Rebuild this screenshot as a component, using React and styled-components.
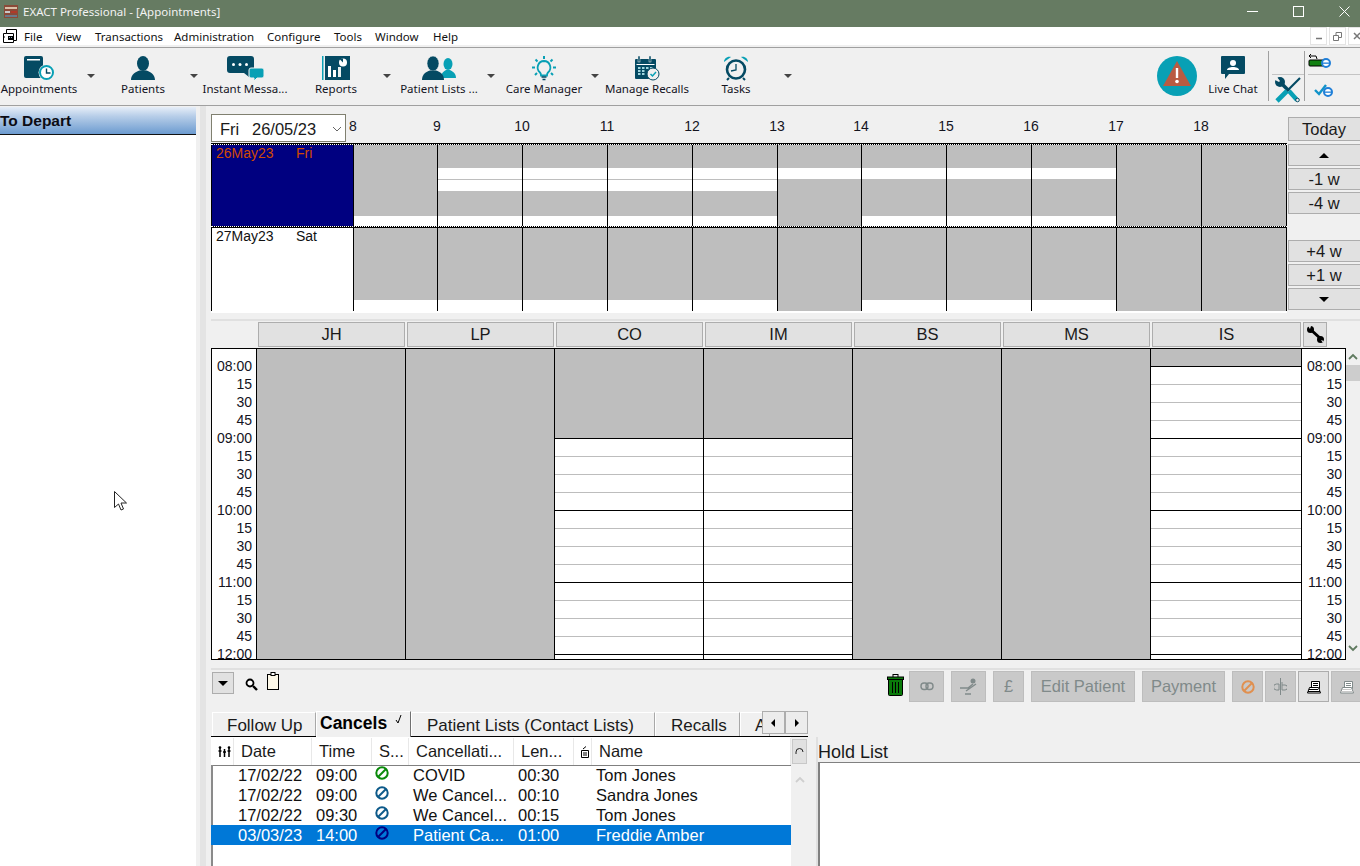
import React from 'react';
import styled, { createGlobalStyle } from 'styled-components';

const DARK = '#044a63';
const TEAL = '#08a0b5';
const GRAY = '#bebebe';

const GlobalStyle = createGlobalStyle`
  html, body {
    margin: 0;
    padding: 0;
    background: #f0f0f0;
    overflow: hidden;
  }
  * { box-sizing: border-box; }
`;

const Page = styled.div`
  width: 1360px;
  height: 866px;
  overflow: hidden;
  display: flex;
  flex-direction: column;
  background: #f0f0f0;
  font-family: "Liberation Sans", Arial, sans-serif;
  color: #111;
`;

/* window chrome */
const TitleBar = styled.div`
  height: 27px;
  flex: none;
  display: flex;
  align-items: center;
  background: #667b62;
  color: #f2f2f2;
  font-family: "Noto Sans", sans-serif;
  font-size: 11.5px;
  padding: 0 0 5px 3px;
`;
const TitleText = styled.span`
  margin-left: 4px;
  flex: 1;
`;
const WinControl = styled.div`
  width: ${(p) => p.$w || 45.5}px;
  padding-left: ${(p) => p.$pl || 0}px;
  height: 22px;
  flex: none;
  display: flex;
  align-items: center;
  justify-content: center;
`;
const MenuBar = styled.div`
  height: 18px;
  flex: none;
  margin-bottom: 2px;
  background: #fff;
  display: flex;
  align-items: center;
  font-family: "Noto Sans", sans-serif;
  font-size: 11.5px;
`;
const MenuIcon = styled.div`
  width: 24px;
  height: 18px;
  padding-left: 2px;
  display: flex;
  align-items: center;
`;
const MenuItem = styled.span`
  width: ${(p) => p.$w}px;
`;
const MdiButtons = styled.div`
  margin-left: auto;
  display: flex;
  gap: 2px;
  width: 50px;
  height: 18px;
`;
const MdiButton = styled.div`
  width: 17px;
  flex: none;
  height: 18px;
  background: #fff;
  border: 1px solid #e4e4e4;
  display: flex;
  align-items: center;
  justify-content: center;
`;

/* main toolbar */
const Toolbar = styled.div`
  height: 59px;
  flex: none;
  display: flex;
  border-top: 1px solid #a0a0a0;
  border-bottom: 1px solid #a0a0a0;
  font-family: "Noto Sans", sans-serif;
  font-size: 11.5px;
`;
const ToolItem = styled.div`
  width: ${(p) => p.$w}px;
  flex: none;
  display: flex;
  flex-direction: column;
  align-items: center;
  padding-top: 8px;
  white-space: nowrap;
`;
const ToolIcon = styled.div`
  height: 25px;
  display: flex;
  align-items: flex-start;
  justify-content: center;
`;
const ToolLabel = styled.div`
  height: 16px;
  line-height: 16px;
  color: #14141e;
`;
const CaretSlot = styled.div`
  width: ${(p) => p.$w}px;
  flex: none;
  display: flex;
  justify-content: center;
  padding-top: 26px;
`;
const Caret = styled.div`
  width: 0;
  height: 0;
  border-left: 4px solid transparent;
  border-right: 4px solid transparent;
  border-top: 4px solid #444;
`;
const Spacer = styled.div`
  width: ${(p) => p.$w}px;
  flex: none;
`;
const AlertSlot = styled.div`
  width: 40px;
  flex: none;
  padding-top: 8px;
`;
const VSep = styled.div`
  width: 1px;
  flex: none;
  margin-top: 3px;
  height: 50px;
  background: #a0a0a0;
`;
const SideGroup = styled.div`
  width: ${(p) => p.$w}px;
  flex: none;
  display: flex;
  flex-direction: column;
  padding: 0 0 0 ${(p) => p.$pad}px;
`;
const SideTop = styled.div`
  height: 27px;
  flex: none;
  border-bottom: 1px solid #c4c4c4;
  display: flex;
  align-items: center;
`;
const SideBottom = styled.div`
  flex: 1;
  max-height: 30px;
  padding-left: 3px;
  display: flex;
  align-items: center;
`;

/* body */
const Body = styled.div`
  flex: 1;
  display: flex;
  min-height: 0;
`;
const LeftPane = styled.div`
  position: relative;
  width: 196px;
  flex: none;
  margin-top: 1px;
  background: #fff;
`;
const DepartHeader = styled.div`
  height: 28px;
  border-bottom: 1px solid #111;
  background: linear-gradient(#e6eef8, #b6cde8 35%, #6c9bd0);
  font-size: 15.5px;
  font-weight: bold;
  line-height: 28px;
  color: #0c0c14;
`;
const Pointer = styled.svg`
  position: absolute;
  left: 114px;
  top: 384px;
`;
const VSplit = styled.div`
  width: 6px;
  flex: none;
  margin: 0 4px;
  background: #e4e4e4;
`;
const Right = styled.div`
  flex: 1;
  min-width: 0;
  display: flex;
  flex-direction: column;
`;

/* week overview */
const CalSection = styled.div`
  height: 207px;
  flex: none;
  display: flex;
  padding-left: 1px;
`;
const CalMain = styled.div`
  width: 1076px;
  flex: none;
  padding-top: 8px;
`;
const CalHead = styled.div`
  height: 29px;
  position: relative;
  display: grid;
  grid-template-columns: 142px 84px 85px 85px 85px 85px 84px 85px 85px 85px 85px 85px;
`;
const DateCombo = styled.div`
  position: relative;
  z-index: 1;
  width: 135px;
  height: 28px;
  background: #fff;
  border: 1px solid #808070;
  font-size: 16.5px;
  line-height: 28px;
  padding-left: 8px;
  display: flex;
  color: #1a1a1a;
`;
const ComboDay = styled.span`
  width: 32px;
  flex: none;
`;
const ComboArrow = styled.svg`
  position: absolute;
  right: 3px;
  top: 11px;
`;
const HourLabel = styled.div`
  width: 0;
  display: flex;
  justify-content: center;
  font-size: 14px;
  line-height: 24px;
  color: #14141e;
`;
const CalGrid = styled.div`
  background: #fff;
  height: 170px;
  border-top: 1px solid #000;
  padding-bottom: 2px;
`;
const CalRow = styled.div`
  display: grid;
  grid-template-columns: 142px 84px 85px 85px 85px 85px 84px 85px 85px 85px 85px 86px;
  height: ${(p) => p.$h}px;
  background: #000;
  border-top: 1px ${(p) => (p.$selected ? 'dotted #fff' : 'solid #000')};
  border-bottom: ${(p) => (p.$selected ? '1px dotted #fff' : 'none')};
`;
const DayCell = styled.div`
  border-left: 1px solid #000;
  background: ${(p) => (p.$selected ? '#000080' : '#fff')};
  color: ${(p) => (p.$selected ? '#d04a00' : '#111')};
  font-size: 14px;
  line-height: 16px;
  padding: 0 0 0 4px;
  display: flex;
`;
const DayDate = styled.span`
  width: 80px;
`;
const HourCell = styled.div`
  border-left: 1px solid #000;
  display: flex;
  flex-direction: column;
  ${(p) => p.$last && 'border-right: 1px solid #000;'}
`;
const Band = styled.div`
  height: ${(p) => p.$h}px;
  background: ${(p) => (p.$fill ? GRAY : '#fff')};
`;
const CalNav = styled.div`
  margin-left: 1px;
  padding-top: 11px;
  display: flex;
  flex-direction: column;
  gap: 2px;
  width: 80px;
  flex: none;
`;
const NavButton = styled.div`
  height: ${(p) => p.$h || 22}px;
  margin-bottom: ${(p) => p.$mb || 0}px;
  flex: none;
  background: #e1e1e1;
  border: 1px solid #adadad;
  font-size: 16.5px;
  color: #1a1a1a;
  display: flex;
  align-items: center;
  justify-content: center;
  padding: 1px 8px 0 0;
`;
const NavGap = styled.div`
  height: 22px;
  flex: none;
`;
const TriUp = styled.div`
  width: 0;
  height: 0;
  border-left: 5px solid transparent;
  border-right: 5px solid transparent;
  border-bottom: 5px solid #000;
`;
const TriDown = styled(TriUp)`
  border-bottom: none;
  border-top: 5px solid #000;
`;

const HSplit = styled.div`
  height: 2px;
  flex: none;
  margin: ${(p) => p.$m};
  background: #e0e0e0;
`;

/* day columns */
const ColHeads = styled.div`
  height: 25px;
  flex: none;
  margin-left: 48px;
  display: flex;
  gap: 2px;
`;
const ColHead = styled.div`
  width: ${(p) => p.$w}px;
  flex: none;
  background: #e1e1e1;
  border: 1px solid #adadad;
  font-size: 16.5px;
  color: #1a1a1a;
  display: flex;
  align-items: center;
  justify-content: center;
`;
const ApptRow = styled.div`
  margin-top: 1px;
  height: 312px;
  flex: none;
  display: flex;
  padding-left: 1px;
`;
const ApptGrid = styled.div`
  width: 1135px;
  flex: none;
  display: flex;
  overflow: hidden;
  border-top: 1px solid #000;
  border-bottom: 1px solid #000;
  border-right: 1px solid #000;
  background: #fff;
`;
const TimeCol = styled.div`
  width: ${(p) => p.$w}px;
  flex: none;
  border-left: 1px solid #000;
  padding: 8px ${(p) => p.$pr}px 0 0;
  text-align: right;
  font-size: 14px;
  line-height: 18px;
  color: #14141e;
`;
const DayCol = styled.div`
  width: ${(p) => p.$w}px;
  flex: none;
  border-left: 1px solid #000;
  background: ${(p) => (p.$closed ? GRAY : '#fff')};
  overflow: hidden;
`;
const ClosedTop = styled.div`
  height: ${(p) => p.$h}px;
  background: ${GRAY};
  border-bottom: 1px solid #000;
`;
const Slot = styled.div`
  height: 18px;
  border-bottom: 1px solid ${(p) => (p.$hour ? '#000' : '#bdbdbd')};
`;
const Scroll = styled.div`
  width: 14px;
  flex: none;
  display: flex;
  flex-direction: column;
  align-items: center;
  padding-top: 5px;
`;
const ScrollThumb = styled.div`
  width: 14px;
  height: 16px;
  margin-top: 5px;
  background: #cdcdcd;
`;
const ScrollDown = styled.div`
  margin-top: auto;
  padding-bottom: 4px;
`;

/* action strip */
const ActionBar = styled.div`
  height: 31px;
  flex: none;
  display: flex;
  align-items: flex-start;
  padding-left: 2px;
  margin-top: 1px;
`;
const DropButton = styled.div`
  width: 22px;
  height: 22px;
  margin-top: 1px;
  background: #e1e1e1;
  border: 1px solid #adadad;
  display: flex;
  align-items: center;
  justify-content: center;
`;
const SmallIcon = styled.div`
  margin: ${(p) => p.$m};
`;
const ActionGroup = styled.div`
  margin-left: auto;
  width: 474px;
  flex: none;
  display: flex;
`;
const ActionButton = styled.div`
  width: ${(p) => p.$w}px;
  height: 31px;
  flex: none;
  margin-left: ${(p) => p.$ml || 0}px;
  background: ${(p) => (p.$on ? '#e1e1e1' : '#c9c9c9')};
  border: 1px solid ${(p) => (p.$on ? '#adadad' : '#bdbdbd')};
  color: #808a8a;
  font-size: 16.5px;
  display: flex;
  align-items: center;
  justify-content: center;
`;

/* tabs */
const TabBar = styled.div`
  position: relative;
  width: 597px;
  height: 26px;
  flex: none;
  margin: 9px 0 0 1px;
  padding-left: 1px;
  display: flex;
  align-items: flex-end;
  border-bottom: 1px solid #000;
  overflow: visible;
`;
const Tab = styled.div`
  width: ${(p) => p.$w}px;
  height: ${(p) => (p.$active ? 26 : 24)}px;
  flex: none;
  margin-bottom: ${(p) => (p.$active ? -1 : 0)}px;
  background: #f0f0f0;
  border-top: 1px solid #fff;
  border-left: 1px solid #fff;
  border-right: 1px solid ${(p) => (p.$active ? '#707070' : '#a8a8a8')};
  font-size: ${(p) => (p.$active ? 17.5 : 17)}px;
  font-weight: ${(p) => (p.$active ? 'bold' : 'normal')};
  color: ${(p) => (p.$active ? '#000' : '#1a1a1a')};
  line-height: ${(p) => (p.$active ? 23 : 25)}px;
  padding-left: ${(p) => p.$pad}px;
  white-space: nowrap;
  overflow: hidden;
  display: flex;
  gap: 8px;
`;
const TabTick = styled.svg`
  margin-top: 3px;
  flex: none;
`;
const TabScroller = styled.div`
  position: absolute;
  left: 551px;
  top: 0;
  display: flex;
`;
const TabScrollBtn = styled.div`
  width: 23px;
  height: 23px;
  background: #ececec;
  border: 1px solid #adadad;
  display: flex;
  align-items: center;
  justify-content: center;
`;

/* list + hold */
const Lower = styled.div`
  flex: 1;
  min-height: 0;
  display: flex;
  padding-left: 1px;
`;
const List = styled.div`
  width: 580px;
  flex: none;
  display: flex;
  flex-direction: column;
  background: #fff;
`;
const ListHead = styled.div`
  height: 28px;
  flex: none;
  display: flex;
  margin-top: 1px;
  background: #fff;
  border-bottom: 1px solid #808080;
`;
const HeadCell = styled.div`
  width: ${(p) => p.$w}px;
  flex: none;
  padding-left: 7px;
  font-size: 16.5px;
  line-height: 27px;
  color: #1a1a1a;
  border-right: 1px solid #e8e8e8;
  white-space: nowrap;
  display: flex;
  align-items: center;
`;
const ListBody = styled.div`
  flex: 1;
  margin-top: -1px;
  border-left: 2px solid #8a8a8a;
`;
const ListRow = styled.div`
  height: 20px;
  display: flex;
  margin-left: -2px;
  padding-left: 2px;
  background: ${(p) => (p.$selected ? '#0078d7' : 'transparent')};
  color: ${(p) => (p.$selected ? '#fff' : '#111')};
`;
const ListCell = styled.div`
  width: ${(p) => p.$w}px;
  flex: none;
  padding-left: 4px;
  font-size: 16.5px;
  line-height: 20px;
  white-space: nowrap;
`;
const StatusIcon = styled.div`
  margin: 1px 0 0 -1px;
  line-height: 0;
`;
const ListScroll = styled.div`
  width: 15px;
  flex: none;
  margin-left: 1px;
  display: flex;
  flex-direction: column;
  align-items: center;
  padding-top: 2px;
`;
const SortButton = styled.div`
  width: 15px;
  height: 25px;
  background: #e1e1e1;
  border: 1px solid #c8c8c8;
  display: flex;
  align-items: center;
  justify-content: center;
`;
const ListUp = styled.div`
  margin-top: 5px;
`;
const HoldSplit = styled.div`
  width: 2px;
  flex: none;
  margin-left: 9px;
  background: #e0e0e0;
`;
const Hold = styled.div`
  flex: 1;
  display: flex;
  flex-direction: column;
`;
const HoldLabel = styled.div`
  height: 25px;
  flex: none;
  font-size: 18px;
  line-height: 31px;
  color: #1a1a1a;
  white-space: nowrap;
`;
const HoldBox = styled.div`
  flex: 1;
  background: #fff;
  border-top: 1px solid #808080;
  border-left: 2px solid #808080;
`;

/* drawings */
const AppLogo = () => (
  <svg width="16" height="15" viewBox="0 0 16 15">
    <rect x="1" y="1" width="14" height="13" fill="#8a4a38" />
    <rect x="2" y="3" width="12" height="2" fill="#d8c0a8" />
    <rect x="2" y="7" width="5" height="2" fill="#c9c9c9" />
    <rect x="8" y="7" width="6" height="2" fill="#b03a2a" />
    <rect x="2" y="11" width="12" height="2" fill="#6a7a8a" />
  </svg>
);
const MenuGlyph = () => (
  <svg width="16" height="16" viewBox="0 0 16 16">
    <path d="M4.500 1.500h10v11h-3v2h-10v-9h3z" fill="#fff" stroke="#000" />
    <path d="M4.500 5.500h7v7M1 9h2" fill="none" stroke="#000" />
    <rect x="6" y="8" width="5" height="4" fill="#000" />
    <rect x="7" y="9" width="1" height="1" fill="#8ab" />
    <rect x="9" y="9" width="1" height="1" fill="#8ab" />
  </svg>
);
const AppointmentsIcon = () => (
  <svg width="31" height="25" viewBox="0 0 31 25">
    <rect x="0" y="0" width="19" height="22" rx="2" fill={DARK} />
    <rect x="3" y="3" width="13" height="1.500" fill="#fff" />
    <circle cx="22.500" cy="16.500" r="8" fill="#f0f0f0" />
    <circle cx="22.500" cy="16.500" r="6.500" fill="#fff" stroke={TEAL} strokeWidth="2" />
    <path d="M22.500 12.500v4.500h4" fill="none" stroke={DARK} strokeWidth="1.400" />
  </svg>
);
const PersonIcon = () => (
  <svg width="24" height="25" viewBox="0 0 24 25">
    <ellipse cx="12" cy="7.500" rx="6" ry="7.500" fill={DARK} />
    <path d="M0 24c0-6 5-8 8.500-9.500h7c3.500 1.500 8.500 3.500 8.500 9.500z" fill={DARK} />
  </svg>
);
const MessageIcon = () => (
  <svg width="37" height="25" viewBox="0 0 37 25">
    <path d="M3 0h21a3 3 0 0 1 3 3v11a3 3 0 0 1-3 3h-2v4l-5-4H3a3 3 0 0 1-3-3V3a3 3 0 0 1 3-3z" fill={DARK} />
    <circle cx="6.500" cy="8.500" r="1.500" fill="#fff" />
    <circle cx="13" cy="8.500" r="1.500" fill="#fff" />
    <circle cx="19.500" cy="8.500" r="1.500" fill="#fff" />
    <path d="M24 12h11a2 2 0 0 1 2 2v6a2 2 0 0 1-2 2h-5l-3 3v-3h-3a2 2 0 0 1-2-2v-6a2 2 0 0 1 2-2z" fill={TEAL} stroke="#f0f0f0" />
  </svg>
);
const ReportsIcon = () => (
  <svg width="28" height="24" viewBox="0 0 28 24">
    <rect x="0" y="0" width="1.500" height="24" fill={TEAL} />
    <rect x="3" y="0" width="25" height="24" fill={DARK} />
    <rect x="6" y="10" width="3" height="11" fill="#fff" />
    <rect x="11" y="14" width="3" height="7" fill="#fff" />
    <rect x="16" y="11" width="3" height="10" fill="#e8f0f0" />
    <circle cx="21" cy="6.500" r="4" fill="#fff" />
    <path d="M21 6.500v-4h-4z" fill={DARK} />
  </svg>
);
const PatientListIcon = () => (
  <svg width="34" height="25" viewBox="0 0 34 25">
    <ellipse cx="26" cy="8" rx="4.500" ry="6" fill={TEAL} />
    <path d="M19 22c0-5 3-7 5-8h4c2 1 6 3 6 8z" fill={TEAL} />
    <ellipse cx="11" cy="7.500" rx="6" ry="7.500" fill={DARK} stroke="#f0f0f0" strokeWidth="0.600" />
    <path d="M0 24c0-6 4-8 8-9.500h6c4 1.500 8 3.500 8 9.500z" fill={DARK} />
  </svg>
);
const BulbIcon = () => (
  <svg width="24" height="25" viewBox="0 0 24 25">
    <path d="M12 5a6.500 6.500 0 0 0-4 11.500c1 1 1 2 1 3h6c0-1 0-2 1-3A6.500 6.500 0 0 0 12 5z" fill="#f0f0f0" stroke={TEAL} strokeWidth="1.800" />
    <path d="M9.500 21h5M10.500 23.500h3" stroke={DARK} strokeWidth="1.600" />
    <path d="M12 0v3M3.500 3.500l2 2M20.500 3.500l-2 2M0 11.500h3M21 11.500h3M3 19l2-2M21 19l-2-2" stroke={TEAL} strokeWidth="2" />
  </svg>
);
const RecallIcon = () => (
  <svg width="25" height="25" viewBox="0 0 25 25">
    <rect x="0" y="3" width="21" height="20" rx="1" fill={DARK} />
    <rect x="3" y="0" width="2" height="6" fill={DARK} stroke="#f0f0f0" strokeWidth="0.500" />
    <rect x="14" y="0" width="2" height="6" fill={DARK} stroke="#f0f0f0" strokeWidth="0.500" />
    <rect x="1.500" y="8" width="18" height="1" fill="#fff" />
    {[3, 7, 11, 15].map((x) => [11, 14, 17].map((y) => (
      <rect key={`${x}-${y}`} x={x} y={y} width="2.500" height="2" fill={x > 10 && y > 13 ? DARK : '#9fd6df'} />
    )))}
    <circle cx="18" cy="18" r="6" fill="#f0f0f0" stroke={DARK} />
    <path d="M15.500 18l2 2 3.500-4" fill="none" stroke={TEAL} strokeWidth="1.500" />
  </svg>
);
const AlarmIcon = () => (
  <svg width="24" height="25" viewBox="0 0 24 25">
    <path d="M0 6c0-3 3-6 7-5zM24 6c0-3-3-6-7-5z" fill={TEAL} />
    <circle cx="12" cy="13.500" r="9" fill="#f0f0f0" stroke={DARK} strokeWidth="2.600" />
    <path d="M12 8v6l-5 1" fill="none" stroke={DARK} strokeWidth="1.300" />
    <path d="M5 22l-2 2M19 22l2 2" stroke={DARK} strokeWidth="2" />
  </svg>
);
const AlertIcon = () => (
  <svg width="40" height="40" viewBox="0 0 40 40">
    <circle cx="20" cy="20" r="20" fill={TEAL} />
    <path d="M20 5l14 25H6z" fill="#b95b42" />
    <rect x="18.800" y="12" width="2.400" height="10" fill="#fff" />
    <circle cx="20" cy="25.500" r="1.800" fill="#fff" />
  </svg>
);
const ChatIcon = () => (
  <svg width="24" height="23" viewBox="0 0 24 23">
    <path d="M1 0h22a1 1 0 0 1 1 1v16a1 1 0 0 1-1 1H8l-4 5v-5H1a1 1 0 0 1-1-1V1a1 1 0 0 1 1-1z" fill={DARK} />
    <circle cx="12" cy="7" r="3" fill="#fff" />
    <path d="M6 14c0-2 3-3 6-3s6 1 6 3z" fill="#fff" />
  </svg>
);
const ToolsIcon = () => (
  <svg width="26" height="26" viewBox="0 0 26 26">
    <path d="M6 6l8 8" stroke={DARK} strokeWidth="3.600" />
    <path d="M14 14l8 9" stroke={TEAL} strokeWidth="4.400" />
    <circle cx="5" cy="5" r="5" fill={DARK} />
    <path d="M2 0l3 4-1 1-4-2V0z" fill="#f0f0f0" />
    <path d="M25 1L13 13" stroke={DARK} strokeWidth="2.200" />
    <path d="M12 14L2 24" stroke={TEAL} strokeWidth="4.600" />
    <circle cx="22.500" cy="23" r="1.800" fill="#f0f0f0" stroke={DARK} />
  </svg>
);
const IeGlyph = ({ x }) => (
  <g>
    <circle cx={x} cy="10" r="4" fill="#fff" stroke="#1f7fd8" strokeWidth="2" />
    <rect x={x - 3} y="9.500" width="6" height="1.300" fill="#1f7fd8" />
  </g>
);
const CableIcon = () => (
  <svg width="24" height="16" viewBox="0 0 24 16">
    <path d="M1 3h7l1 3" fill="none" stroke="#000" />
    <path d="M1 3l2-2M1 3l2 2" stroke="#000" />
    <rect x="1" y="7" width="15" height="6" rx="1" fill="#128012" stroke="#000" />
    <IeGlyph x={18} />
  </svg>
);
const TickIcon = () => (
  <svg width="20" height="16" viewBox="0 0 20 16">
    <path d="M1 8l4 4 7-9" fill="none" stroke="#1193c9" strokeWidth="2.400" />
    <IeGlyph x={14} />
  </svg>
);
const Wrench = () => (
  <svg width="17" height="17" viewBox="0 0 17 17">
    <path d="M3 3l11 10" stroke="#000" strokeWidth="3" />
    <circle cx="3.500" cy="3.500" r="3.500" fill="#000" />
    <circle cx="13.500" cy="13.500" r="3.500" fill="#000" />
    <path d="M3 3L1 0h3zM14 14l3 1-1 2z" fill="#e1e1e1" />
  </svg>
);
const Chevron = ({ up, color }) => (
  <svg width="10" height="7" viewBox="0 0 10 7">
    <path d={up ? 'M1 6l4-4 4 4' : 'M1 1l4 4 4-4'} fill="none" stroke={color} strokeWidth="1.800" />
  </svg>
);
const Loupe = () => (
  <svg width="13" height="13" viewBox="0 0 13 13">
    <circle cx="5" cy="5" r="3.500" fill="#fff" stroke="#000" strokeWidth="1.800" />
    <path d="M8 8l4 4" stroke="#000" strokeWidth="2.400" />
  </svg>
);
const Clipboard = () => (
  <svg width="14" height="18" viewBox="0 0 14 18">
    <rect x="1.500" y="2.500" width="11" height="15" fill="#fdf8e8" stroke="#000" />
    <rect x="5" y="0.500" width="4" height="3" fill="#fff" stroke="#000" />
  </svg>
);
const Bin = () => (
  <svg width="17" height="22" viewBox="0 0 17 22">
    <rect x="6" y="0.500" width="5" height="3" fill="none" stroke="#000" />
    <rect x="0.500" y="3" width="16" height="2.500" fill="#0a7a0a" stroke="#000" />
    <path d="M1.500 5.500h14v15a1 1 0 0 1-1 1h-12a1 1 0 0 1-1-1z" fill="#0a7a0a" stroke="#000" />
    <path d="M5.500 8v11M8.500 8v11M11.500 8v11" stroke="#000" />
  </svg>
);
const LinkGlyph = () => (
  <svg width="14" height="9" viewBox="0 0 14 9">
    <rect x="1" y="1" width="7" height="6.500" rx="3" fill="none" stroke="#808a8a" strokeWidth="1.400" />
    <rect x="6" y="1" width="7" height="6.500" rx="3" fill="none" stroke="#808a8a" strokeWidth="1.400" />
  </svg>
);
const ChairGlyph = () => (
  <svg width="19" height="17" viewBox="0 0 19 17">
    <circle cx="14" cy="3" r="2.500" fill="#808a8a" />
    <path d="M14 6L9 10H1M7 13l10-7M6 16h6" fill="none" stroke="#808a8a" strokeWidth="1.400" />
  </svg>
);
const NoEntry = ({ size, color }) => (
  <svg width={size} height={size} viewBox="0 0 14 14">
    <circle cx="7" cy="7" r="5.700" fill="none" stroke={color} strokeWidth="2" />
    <path d="M3 11l8-8" stroke={color} strokeWidth="2" />
  </svg>
);
const SplitGlyph = () => (
  <svg width="13" height="17" viewBox="0 0 13 17">
    <path d="M6.500 0v17" stroke="#808a8a" />
    <path d="M5 6H2.500a2 2 0 0 0 0 6H5zM8 4v8h3a2 2 0 0 0 0-5H8" fill="none" stroke="#808a8a" />
  </svg>
);
const PrintGlyph = ({ color, solid }) => (
  <svg width="14" height="14" viewBox="0 0 14 14">
    <path d="M4.500 1.500h8v7h-8z" fill="#fff" stroke={color} />
    <path d="M6 3.500h5M6 5.500h5" stroke={color} />
    <path d="M2.500 7.500h9l2 5.500H.5z" fill="#fff" stroke={color} />
    <path d="M2 9.500h9M1 11.500h12" stroke={solid ? color : '#c9c9c9'} />
  </svg>
);
const PeopleGlyph = () => (
  <svg width="13" height="12" viewBox="0 0 13 12">
    <path d="M2 2v9M6.500 3v8M11 2v9M0.500 5h3M5 6h3M9.500 5h3" stroke="#000" strokeWidth="1.500" />
    <circle cx="2" cy="1.500" r="1.300" />
    <circle cx="11" cy="1.500" r="1.300" />
  </svg>
);
const NoteGlyph = () => (
  <svg width="8" height="12" viewBox="0 0 8 12">
    <path d="M0.500 4.500h7v7h-7zM2 3l3-2.500" fill="#fff" stroke="#000" />
    <path d="M2 7h4M2 9h4" stroke="#000" />
  </svg>
);
const SortGlyph = () => (
  <svg width="9" height="9" viewBox="0 0 9 9">
    <path d="M1 5a3.500 3.500 0 0 1 7 0M1 5v2" fill="none" stroke="#222" />
  </svg>
);

const HOURS = ['8', '9', '10', '11', '12', '13', '14', '15', '16', '17', '18'];
const g = (h) => ({ h, fill: true });
const w = (h) => ({ h, fill: false });

const ROW_ONE = [
  [g(71), w(10)],
  [g(23), w(11), g(1), w(11), g(25), w(10)],
  [g(23), w(11), g(1), w(11), g(25), w(10)],
  [g(23), w(11), g(1), w(11), g(25), w(10)],
  [g(23), w(11), g(1), w(11), g(25), w(10)],
  [g(23), w(11), g(47)],
  [g(23), w(11), g(37), w(10)],
  [g(23), w(11), g(37), w(10)],
  [g(23), w(11), g(37), w(10)],
  [g(81)],
  [g(81)],
];
const ROW_TWO = HOURS.map((_, i) => ([5, 9, 10].includes(i) ? [g(83)] : [g(72), w(11)]));

const TIMES = [];
for (let h = 8; h < 12; h++) {
  TIMES.push(`${String(h).padStart(2, '0')}:00`, '15', '30', '45');
}
TIMES.push('12:00');

const DOCTORS = [
  { name: 'JH', head: 147, col: 149, closed: true },
  { name: 'LP', head: 147, col: 149, closed: true },
  { name: 'CO', head: 147, col: 149, top: 89 },
  { name: 'IM', head: 147, col: 149, top: 89 },
  { name: 'BS', head: 147, col: 149, closed: true },
  { name: 'MS', head: 147, col: 149, closed: true },
  { name: 'IS', head: 149, col: 151, top: 17 },
];

const COLS = [23, 78, 60, 37, 105, 60, 18, 199];

const ROWS = [
  { date: '17/02/22', time: '09:00', status: '#0a8a0a', reason: 'COVID', len: '00:30', name: 'Tom Jones' },
  { date: '17/02/22', time: '09:00', status: '#0d5a8a', reason: 'We Cancel...', len: '00:10', name: 'Sandra Jones' },
  { date: '17/02/22', time: '09:30', status: '#0d5a8a', reason: 'We Cancel...', len: '00:15', name: 'Tom Jones' },
  { date: '03/03/23', time: '14:00', status: '#000080', reason: 'Patient Ca...', len: '01:00', name: 'Freddie Amber', selected: true },
];

const TOOLS = [
  { label: 'Appointments', icon: <AppointmentsIcon />, w: 78, caret: 26 },
  { label: 'Patients', icon: <PersonIcon />, w: 78, caret: 24 },
  { label: 'Instant Messa...', icon: <MessageIcon />, w: 78, gap: 13 },
  { label: 'Reports', icon: <ReportsIcon />, w: 78, caret: 24 },
  { label: 'Patient Lists ...', icon: <PatientListIcon />, w: 80, caret: 24 },
  { label: 'Care Manager', icon: <BulbIcon />, w: 82, caret: 20 },
  { label: 'Manage Recalls', icon: <RecallIcon />, w: 84 },
  { label: 'Tasks', icon: <AlarmIcon />, w: 94, caret: 10 },
];

const MENUS = [
  ['File', 32], ['View', 39], ['Transactions', 79], ['Administration', 93],
  ['Configure', 67], ['Tools', 41], ['Window', 58], ['Help', 30],
];

const DayGridColumn = ({ doc }) => {
  if (doc.closed) return <DayCol $w={doc.col} $closed />;
  const slots = [];
  for (let i = 1; i < 20; i++) slots.push(<Slot key={i} $hour={i % 4 === 0} />);
  return (
    <DayCol $w={doc.col}>
      <ClosedTop $h={doc.top + 1} />
      {slots}
    </DayCol>
  );
};

export default function App() {
  return (
    <Page>
      <GlobalStyle />
      <TitleBar>
        <AppLogo />
        <TitleText>EXACT Professional - [Appointments]</TitleText>
        <WinControl>
          <svg width="11" height="11" viewBox="0 0 11 11"><path d="M0 5.500h11" stroke="#fff" /></svg>
        </WinControl>
        <WinControl>
          <svg width="11" height="11" viewBox="0 0 11 11"><rect x="0.500" y="0.500" width="10" height="10" fill="none" stroke="#fff" /></svg>
        </WinControl>
        <WinControl $w={39} $pl={7}>
          <svg width="11" height="11" viewBox="0 0 11 11"><path d="M0.500 0.500l10 10M10.500 0.500l-10 10" stroke="#fff" /></svg>
        </WinControl>
      </TitleBar>

      <MenuBar>
        <MenuIcon><MenuGlyph /></MenuIcon>
        {MENUS.map(([label, width]) => (
          <MenuItem key={label} $w={width}>{label}</MenuItem>
        ))}
        <MdiButtons>
          <MdiButton>
            <svg width="8" height="8" viewBox="0 0 8 8"><path d="M1 6.500h6" stroke="#777" strokeWidth="1.500" /></svg>
          </MdiButton>
          <MdiButton>
            <svg width="9" height="9" viewBox="0 0 9 9"><path d="M0.500 3.500h5v5h-5zM3 3V0.500h5.500v5H6" fill="none" stroke="#777" /></svg>
          </MdiButton>
          <MdiButton>
            <svg width="8" height="8" viewBox="0 0 8 8"><path d="M1 1l6 6M7 1l-6 6" stroke="#777" strokeWidth="1.500" /></svg>
          </MdiButton>
        </MdiButtons>
      </MenuBar>

      <Toolbar>
        {TOOLS.map((tool) => (
          <React.Fragment key={tool.label}>
            <ToolItem $w={tool.w}>
              <ToolIcon>{tool.icon}</ToolIcon>
              <ToolLabel>{tool.label}</ToolLabel>
            </ToolItem>
            {tool.caret && <CaretSlot $w={tool.caret}><Caret /></CaretSlot>}
            {tool.gap && <Spacer $w={tool.gap} />}
          </React.Fragment>
        ))}
        <Spacer $w={364} />
        <AlertSlot><AlertIcon /></AlertSlot>
        <Spacer $w={6} />
        <ToolItem $w={60}>
          <ToolIcon><ChatIcon /></ToolIcon>
          <ToolLabel>Live Chat</ToolLabel>
        </ToolItem>
        <Spacer $w={5} />
        <VSep />
        <SideGroup $w={35} $pad={3}>
          <SideTop />
          <SideBottom><ToolsIcon /></SideBottom>
        </SideGroup>
        <VSep />
        <SideGroup $w={55} $pad={3}>
          <SideTop><CableIcon /></SideTop>
          <SideBottom><Spacer $w={3} /><TickIcon /></SideBottom>
        </SideGroup>
      </Toolbar>

      <Body>
        <LeftPane>
          <DepartHeader>To Depart</DepartHeader>
          <Pointer width="13" height="20" viewBox="0 0 13 20">
            <path d="M0.500 0.500v16l4-3.500 2.500 6 2.500-1-2.500-6h5.500z" fill="#fff" stroke="#222" />
          </Pointer>
        </LeftPane>
        <VSplit />
        <Right>
          <CalSection>
            <CalMain>
              <CalHead>
                <DateCombo>
                  <ComboDay>Fri</ComboDay>
                  <span>26/05/23</span>
                  <ComboArrow width="10" height="6" viewBox="0 0 10 6">
                    <path d="M1 1l4 4 4-4" fill="none" stroke="#666" />
                  </ComboArrow>
                </DateCombo>
                {HOURS.map((h) => <HourLabel key={h}>{h}</HourLabel>)}
              </CalHead>
              <CalGrid>
                <CalRow $h={83} $selected>
                  <DayCell $selected><DayDate>26May23</DayDate>Fri</DayCell>
                  {ROW_ONE.map((bands, i) => (
                    <HourCell key={i} $last={i === 10}>
                      {bands.map((b, j) => <Band key={j} $h={b.h} $fill={b.fill} />)}
                    </HourCell>
                  ))}
                </CalRow>
                <CalRow $h={84}>
                  <DayCell><DayDate>27May23</DayDate>Sat</DayCell>
                  {ROW_TWO.map((bands, i) => (
                    <HourCell key={i} $last={i === 10}>
                      {bands.map((b, j) => <Band key={j} $h={b.h} $fill={b.fill} />)}
                    </HourCell>
                  ))}
                </CalRow>
              </CalGrid>
            </CalMain>
            <CalNav>
              <NavButton $h={24} $mb={1}>Today</NavButton>
              <NavButton><TriUp /></NavButton>
              <NavButton>-1 w</NavButton>
              <NavButton>-4 w</NavButton>
              <NavGap />
              <NavButton>+4 w</NavButton>
              <NavButton>+1 w</NavButton>
              <NavButton><TriDown /></NavButton>
            </CalNav>
          </CalSection>

          <HSplit $m="6px 0 1px 1px" />

          <ColHeads>
            {DOCTORS.map((d) => <ColHead key={d.name} $w={d.head}>{d.name}</ColHead>)}
            <ColHead $w={24}><Wrench /></ColHead>
          </ColHeads>

          <ApptRow>
            <ApptGrid>
              <TimeCol $w={45} $pr={4}>
                {TIMES.map((t, i) => <div key={i}>{t}</div>)}
              </TimeCol>
              {DOCTORS.map((d) => <DayGridColumn key={d.name} doc={d} />)}
              <TimeCol $w={44} $pr={3}>
                {TIMES.map((t, i) => <div key={i}>{t}</div>)}
              </TimeCol>
            </ApptGrid>
            <Scroll>
              <Chevron up color="#5f7a5f" />
              <ScrollThumb />
              <ScrollDown><Chevron color="#5f7a5f" /></ScrollDown>
            </Scroll>
          </ApptRow>

          <HSplit $m="8px 0 0 1px" />

          <ActionBar>
            <DropButton><TriDown /></DropButton>
            <SmallIcon $m="6px 0 0 11px"><Loupe /></SmallIcon>
            <SmallIcon $m="1px 0 0 8px"><Clipboard /></SmallIcon>
            <ActionGroup>
              <SmallIcon $m="3px 5px 0 1px"><Bin /></SmallIcon>
              <ActionButton $w={35}><LinkGlyph /></ActionButton>
              <ActionButton $w={35} $ml={7}><ChairGlyph /></ActionButton>
              <ActionButton $w={31} $ml={7}>£</ActionButton>
              <ActionButton $w={104} $ml={7}>Edit Patient</ActionButton>
              <ActionButton $w={83} $ml={7}>Payment</ActionButton>
              <ActionButton $w={31} $ml={7}><NoEntry size={14} color="#e09050" /></ActionButton>
              <ActionButton $w={31} $ml={2}><SplitGlyph /></ActionButton>
              <ActionButton $w={31} $ml={2} $on><PrintGlyph color="#000" solid /></ActionButton>
              <ActionButton $w={31} $ml={2}><PrintGlyph color="#808a8a" /></ActionButton>
            </ActionGroup>
          </ActionBar>

          <TabBar>
            <Tab $w={104} $pad={14}>Follow Up</Tab>
            <Tab $w={95} $pad={3} $active>
              Cancels
              <TabTick width="7" height="9" viewBox="0 0 7 9"><path d="M1 5l2 3 3-8" fill="none" stroke="#000" /></TabTick>
            </Tab>
            <Tab $w={244} $pad={15}>Patient Lists (Contact Lists)</Tab>
            <Tab $w={85} $pad={15}>Recalls</Tab>
            <Tab $w={30} $pad={14}>A</Tab>
            <TabScroller>
              <TabScrollBtn><svg width="5" height="8" viewBox="0 0 5 8"><path d="M4 0v8L0 4z" /></svg></TabScrollBtn>
              <TabScrollBtn><svg width="5" height="8" viewBox="0 0 5 8"><path d="M1 0v8l4-4z" /></svg></TabScrollBtn>
            </TabScroller>
          </TabBar>

          <Lower>
            <List>
              <ListHead>
                <HeadCell $w={COLS[0]}><PeopleGlyph /></HeadCell>
                <HeadCell $w={COLS[1]}>Date</HeadCell>
                <HeadCell $w={COLS[2]}>Time</HeadCell>
                <HeadCell $w={COLS[3]}>S...</HeadCell>
                <HeadCell $w={COLS[4]}>Cancellati...</HeadCell>
                <HeadCell $w={COLS[5]}>Len...</HeadCell>
                <HeadCell $w={COLS[6]}><NoteGlyph /></HeadCell>
                <HeadCell $w={COLS[7]}>Name</HeadCell>
              </ListHead>
              <ListBody>
                {ROWS.map((r, i) => (
                  <ListRow key={i} $selected={r.selected}>
                    <ListCell $w={COLS[0] - 2} />
                    <ListCell $w={COLS[1]}>{r.date}</ListCell>
                    <ListCell $w={COLS[2]}>{r.time}</ListCell>
                    <ListCell $w={COLS[3]}><StatusIcon><NoEntry size={14} color={r.status} /></StatusIcon></ListCell>
                    <ListCell $w={COLS[4]}>{r.reason}</ListCell>
                    <ListCell $w={COLS[5]}>{r.len}</ListCell>
                    <ListCell $w={COLS[6]} />
                    <ListCell $w={COLS[7]}>{r.name}</ListCell>
                  </ListRow>
                ))}
              </ListBody>
            </List>
            <ListScroll>
              <SortButton><SortGlyph /></SortButton>
              <ListUp><Chevron up color="#cfcfcf" /></ListUp>
            </ListScroll>
            <HoldSplit />
            <Hold>
              <HoldLabel>Hold List</HoldLabel>
              <HoldBox />
            </Hold>
          </Lower>
        </Right>
      </Body>
    </Page>
  );
}
